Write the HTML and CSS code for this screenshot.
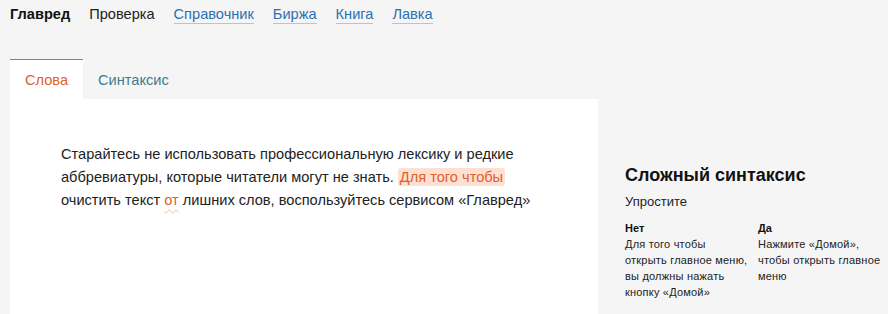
FILE: index.html
```html
<!DOCTYPE html>
<html lang="ru">
<head>
  <meta charset="UTF-8" />
  <meta name="viewport" content="width=device-width, initial-scale=1.0" />
  <title>Главред</title>
  <link rel="stylesheet" href="styles.css">
</head>
<body>
  <nav class="nav">
    <span class="nav-item current">Главред</span>
    <span class="nav-item">Проверка</span>
    <a class="nav-item link" href="#">Справочник</a>
    <a class="nav-item link" href="#">Биржа</a>
    <a class="nav-item link" href="#">Книга</a>
    <a class="nav-item link" href="#">Лавка</a>
  </nav>

  <div class="tabs">
    <div class="tab active">Слова</div>
    <div class="tab">Синтаксис</div>
  </div>

  <div class="main">
    <div class="editor">
      <p>Старайтесь не использовать профессиональную лексику и редкие аббревиатуры, которые читатели могут не знать. <span class="mark">Для того чтобы</span> очистить текст <span class="weak">от</span> лишних слов, воспользуйтесь сервисом «Главред»</p>
    </div>
    <aside class="hint">
      <h2>Сложный синтаксис</h2>
      <p class="hint-sub">Упростите</p>
      <div class="examples">
        <div class="example">
          <b>Нет</b>
          Для того чтобы открыть главное меню, вы должны нажать кнопку «Домой»
        </div>
        <div class="example">
          <b>Да</b>
          Нажмите «Домой», чтобы открыть главное меню
        </div>
      </div>
    </aside>
  </div>
</body>
</html>
```

FILE: styles.css
```css
body {
  margin: 0;
  font-family: 'Liberation Sans', Arial, sans-serif;
  background: #f5f5f5;
  color: #222;
}
.nav {
  display: flex;
  align-items: flex-start;
  gap: 19px;
  padding: 5px 10px 0;
  height: 59px;
  box-sizing: border-box;
  font-size: 14.6px;
}
.nav-item {
  line-height: 18px;
  color: #222;
}
.nav-item.current {
  font-weight: bold;
  color: #111;
}
.link {
  color: #2e70b0;
  text-decoration: none;
  border-bottom: 1px solid #a9c8e6;
}
.tabs {
  display: flex;
  margin-left: 10px;
}
.tab {
  height: 40px;
  line-height: 40px;
  padding: 0 15px;
  font-size: 14.6px;
  color: #3a7c92;
  border-top: 1px solid transparent;
  box-sizing: border-box;
}
.tab.active {
  background: #fff;
  color: #e0612a;
  border-top-color: #e0612a;
}
.main {
  display: flex;
  margin-left: 10px;
}
.editor {
  width: 588px;
  min-height: 215px;
  background: #fff;
  padding: 44px 50px 0 51px;
  box-sizing: border-box;
}
.editor p {
  margin: 0;
  font-size: 14.6px;
  line-height: 23px;
  color: #222;
}
.mark {
  background: #fde0d2;
  color: #e0612a;
  border-radius: 3px;
  padding: 1px 2px;
}
.weak {
  color: #e0612a;
  text-decoration: underline wavy #f3b9a0;
  text-decoration-thickness: 1px;
  text-underline-offset: 4px;
}
.hint {
  padding: 64px 0 0 27px;
  width: 260px;
}
.hint h2 {
  margin: 0;
  font-size: 18px;
  line-height: 24px;
  color: #111;
}
.hint-sub {
  margin: 7px 0 0;
  font-size: 13px;
  line-height: 16px;
}
.examples {
  display: grid;
  grid-template-columns: 123px 123px;
  column-gap: 10px;
  margin-top: 10px;
  font-size: 11px;
  letter-spacing: 0.2px;
  line-height: 16px;
}
.example b {
  display: block;
  color: #111;
  letter-spacing: 0;
}
```
